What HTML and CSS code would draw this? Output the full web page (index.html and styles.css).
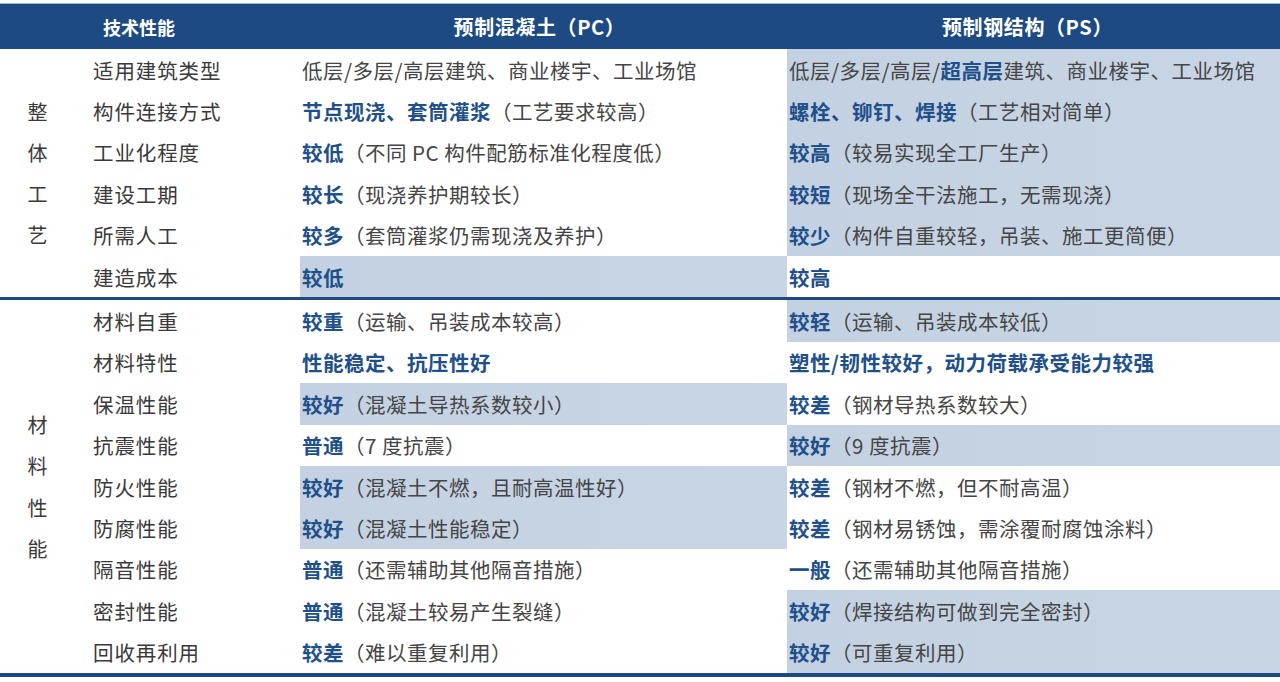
FILE: index.html
```html
<!DOCTYPE html>
<html lang="zh">
<head>
<meta charset="utf-8">
<title>PC vs PS</title>
<link rel="stylesheet" href="styles.css">
</head>
<body>
<div class="table">
  <div class="head">
    <div class="h h1">技术性能</div>
    <div class="h h2">预制混凝土（PC）</div>
    <div class="h h3">预制钢结构（PS）</div>
  </div>

  <div class="sec sec6">
    <div class="cat r6"><span>整</span><span>体</span><span>工</span><span>艺</span></div>
    <div class="lab">适用建筑类型</div>
    <div class="val">低层/多层/高层建筑、商业楼宇、工业场馆</div>
    <div class="val sh">低层/多层/高层/<b>超高层</b>建筑、商业楼宇、工业场馆</div>

    <div class="lab">构件连接方式</div>
    <div class="val"><b>节点现浇、套筒灌浆</b>（工艺要求较高）</div>
    <div class="val sh"><b>螺栓、铆钉、焊接</b>（工艺相对简单）</div>

    <div class="lab">工业化程度</div>
    <div class="val"><b>较低</b>（不同 PC 构件配筋标准化程度低）</div>
    <div class="val sh"><b>较高</b>（较易实现全工厂生产）</div>

    <div class="lab">建设工期</div>
    <div class="val"><b>较长</b>（现浇养护期较长）</div>
    <div class="val sh"><b>较短</b>（现场全干法施工，无需现浇）</div>

    <div class="lab">所需人工</div>
    <div class="val"><b>较多</b>（套筒灌浆仍需现浇及养护）</div>
    <div class="val sh"><b>较少</b>（构件自重较轻，吊装、施工更简便）</div>

    <div class="lab">建造成本</div>
    <div class="val sh"><b>较低</b></div>
    <div class="val"><b>较高</b></div>
  </div>

  <div class="sec sec9">
    <div class="cat r9"><span>材</span><span>料</span><span>性</span><span>能</span></div>
    <div class="lab">材料自重</div>
    <div class="val"><b>较重</b>（运输、吊装成本较高）</div>
    <div class="val sh"><b>较轻</b>（运输、吊装成本较低）</div>

    <div class="lab">材料特性</div>
    <div class="val"><b>性能稳定、抗压性好</b></div>
    <div class="val"><b>塑性/韧性较好，动力荷载承受能力较强</b></div>

    <div class="lab">保温性能</div>
    <div class="val sh"><b>较好</b>（混凝土导热系数较小）</div>
    <div class="val"><b>较差</b>（钢材导热系数较大）</div>

    <div class="lab">抗震性能</div>
    <div class="val"><b>普通</b>（7 度抗震）</div>
    <div class="val sh"><b>较好</b>（9 度抗震）</div>

    <div class="lab">防火性能</div>
    <div class="val sh"><b>较好</b>（混凝土不燃，且耐高温性好）</div>
    <div class="val"><b>较差</b>（钢材不燃，但不耐高温）</div>

    <div class="lab">防腐性能</div>
    <div class="val sh"><b>较好</b>（混凝土性能稳定）</div>
    <div class="val"><b>较差</b>（钢材易锈蚀，需涂覆耐腐蚀涂料）</div>

    <div class="lab">隔音性能</div>
    <div class="val"><b>普通</b>（还需辅助其他隔音措施）</div>
    <div class="val"><b>一般</b>（还需辅助其他隔音措施）</div>

    <div class="lab">密封性能</div>
    <div class="val"><b>普通</b>（混凝土较易产生裂缝）</div>
    <div class="val sh"><b>较好</b>（焊接结构可做到完全密封）</div>

    <div class="lab">回收再利用</div>
    <div class="val"><b>较差</b>（难以重复利用）</div>
    <div class="val sh"><b>较好</b>（可重复利用）</div>
  </div>
</div>
</body>
</html>
```
FILE: styles.css
```css
html, body {
  margin: 0;
  padding: 0;
  background: #ffffff;
}
body {
  font-family: "Noto Sans CJK SC", "Noto Sans", sans-serif;
  color: #3c3c3c;
  width: 1280px;
  height: 682px;
  overflow: hidden;
  padding-top: 3px;
  box-sizing: border-box;
}
.table {
  width: 1280px;
}
.head {
  display: grid;
  grid-template-columns: 300px 487px 493px;
  height: 45px;
  background: #1d4a82;
  border-top: 1px solid #9db7d3;
  color: #ffffff;
  font-weight: 700;
  font-size: 19px;
  align-items: center;
}
.h1 {
  padding-left: 103px;
  font-size: 18px;
}
.h2, .h3 {
  text-align: center;
  font-size: 20px;
  letter-spacing: 0.6px;
}
.h2 {
  padding-right: 8px;
}
.h3 {
  padding-right: 12px;
}
.sec {
  display: grid;
  grid-template-columns: 75px 225px 487px 493px;
  grid-auto-rows: 41.4px;
}
.sec9 {
  border-top: 3px solid #1d4a82;
  border-bottom: 4px solid #1d4a82;
  grid-auto-rows: 41.4px;
}
.cat {
  grid-column: 1;
  display: flex;
  flex-direction: column;
  align-items: center;
  justify-content: center;
  font-size: 20px;
  line-height: 41.3px;
  color: #3a3a3a;
}
.r6 { grid-row: 1 / span 6; }
.r9 { grid-row: 1 / span 9; }
.lab {
  display: flex;
  align-items: center;
  padding-left: 18px;
  font-size: 20.5px;
  letter-spacing: 0.9px;
  color: #3a3a3a;
}
.val {
  display: flex;
  align-items: center;
  padding-left: 2px;
  font-size: 20.5px;
  letter-spacing: 0.5px;
  color: #454545;
  white-space: nowrap;
}
.val b {
  color: #214f8a;
  font-weight: 700;
}
.sh {
  background: linear-gradient(90deg, #c3d1e2 0%, #c8d5e4 100%);
}
```
